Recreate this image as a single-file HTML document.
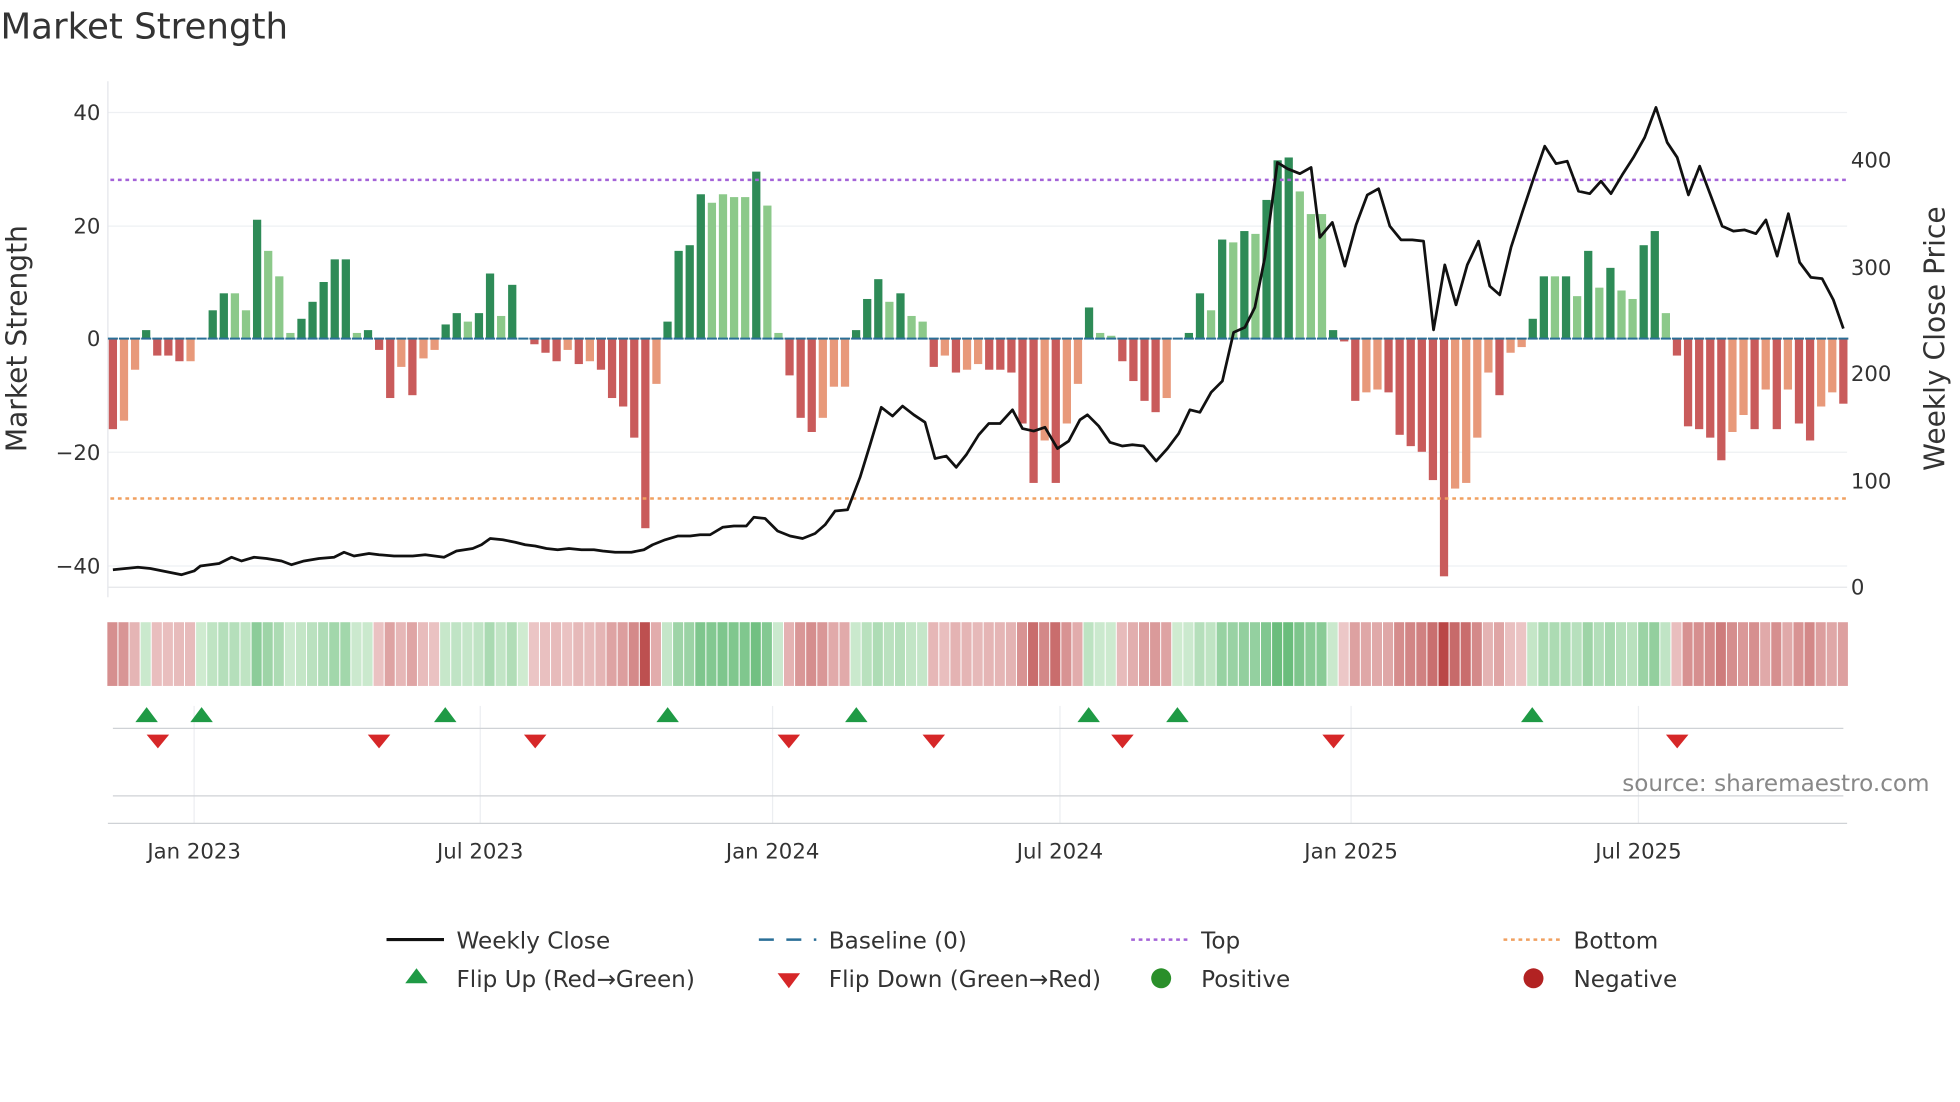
<!DOCTYPE html>
<html><head><meta charset="utf-8"><style>
html,body{margin:0;padding:0;background:#fff;}
svg{display:block;font-family:"DejaVu Sans","Liberation Sans",sans-serif;}
</style></head><body>
<svg id="s" width="1960" height="1102" viewBox="0 0 1568 882" xmlns="http://www.w3.org/2000/svg">
<rect width="1568" height="882" fill="#fff"/>
<text x="0" y="31" font-size="28.5" fill="#333">Market Strength</text>
<g stroke="#eef0f3" stroke-width="1">
<line x1="86" x2="1478" y1="90" y2="90"/><line x1="86" x2="1478" y1="181" y2="181"/>
<line x1="86" x2="1478" y1="362" y2="362"/><line x1="86" x2="1478" y1="453" y2="453"/>
<line x1="86" x2="1478" y1="271" y2="271"/>
</g>
<line x1="86" x2="86" y1="65" y2="478" stroke="#e4e6ea"/>
<line x1="86" x2="1478" y1="470" y2="470" stroke="#e4e6ea"/>
<g id="bars"></g>
<line x1="88" x2="1478" y1="144" y2="144" stroke="#a463d8" stroke-width="2" stroke-dasharray="3,3"/>
<line x1="88" x2="1478" y1="399" y2="399" stroke="#f0a060" stroke-width="2" stroke-dasharray="3,3"/>
<polyline id="price" fill="none" stroke="#111" stroke-width="2.2" stroke-linejoin="round"/>
<g font-size="17" fill="#333" text-anchor="end">
<text x="80" y="96">40</text><text x="80" y="187">20</text><text x="80" y="277">0</text>
<text x="80" y="368">−20</text><text x="80" y="459">−40</text>
</g>
<g font-size="17" fill="#333">
<text x="1481" y="134">400</text><text x="1481" y="220">300</text><text x="1481" y="305">200</text>
<text x="1481" y="391">100</text><text x="1481" y="476">0</text>
</g>
<text transform="translate(21,271) rotate(-90)" font-size="22.5" fill="#333" text-anchor="middle">Market Strength</text>
<text transform="translate(1556,271) rotate(-90)" font-size="22.5" fill="#333" text-anchor="middle">Weekly Close Price</text>
<g id="heat"></g>
<g stroke="#eceef1">
<line x1="155" x2="155" y1="565" y2="659"/><line x1="384" x2="384" y1="565" y2="659"/>
<line x1="618" x2="618" y1="565" y2="659"/><line x1="848" x2="848" y1="565" y2="659"/>
<line x1="1081" x2="1081" y1="565" y2="659"/><line x1="1311" x2="1311" y1="565" y2="659"/>
</g>
<line x1="90" x2="1475" y1="583" y2="583" stroke="#cfd2d6"/>
<line x1="90" x2="1475" y1="637" y2="637" stroke="#cfd2d6"/>
<line x1="86" x2="1478" y1="659" y2="659" stroke="#cfd2d6"/>
<g id="marks"></g>
<text x="1544" y="633" font-size="18.5" fill="#888" text-anchor="end">source: sharemaestro.com</text>
<g font-size="17" fill="#333" text-anchor="middle">
<text x="155" y="687">Jan 2023</text><text x="384" y="687">Jul 2023</text><text x="618" y="687">Jan 2024</text>
<text x="848" y="687">Jul 2024</text><text x="1081" y="687">Jan 2025</text><text x="1311" y="687">Jul 2025</text>
</g>
<g font-size="18.5" fill="#333">
<line x1="309" x2="355" y1="752" y2="752" stroke="#111" stroke-width="2.5"/><text x="365" y="759">Weekly Close</text>
<line x1="607" x2="653" y1="752" y2="752" stroke="#2a6f97" stroke-width="2" stroke-dasharray="12,10"/><text x="663" y="759">Baseline (0)</text>
<line x1="905" x2="951" y1="752" y2="752" stroke="#a463d8" stroke-width="2" stroke-dasharray="3,3"/><text x="961" y="759">Top</text>
<line x1="1203" x2="1249" y1="752" y2="752" stroke="#f0a060" stroke-width="2" stroke-dasharray="3,3"/><text x="1259" y="759">Bottom</text>
<polygon points="333,775 324,787 342,787" fill="#1f9a45"/><text x="365" y="790">Flip Up (Red→Green)</text>
<polygon points="622,779 640,779 631,791" fill="#d62728"/><text x="663" y="790">Flip Down (Green→Red)</text>
<circle cx="929" cy="783" r="8" fill="#2a8f2a"/><text x="961" y="790">Positive</text>
<circle cx="1227" cy="783" r="8" fill="#b22222"/><text x="1259" y="790">Negative</text>
</g>
</svg>
<script>
var V="-16,-14.5L,-5.5L,1.5,-3,-3,-4,-4L,0,5,8,8L,5L,21,15.5L,11L,1L,3.5,6.5,10,14,14,1L,1.5,-2,-10.5,-5L,-10,-3.5L,-2L,2.5,4.5,3L,4.5,11.5,4L,9.5,0,-1,-2.5,-4,-2L,-4.5,-4L,-5.5,-10.5,-12,-17.5,-33.5,-8L,3,15.5,16.5,25.5,24L,25.5L,25L,25L,29.5,23.5L,1L,-6.5,-14,-16.5,-14L,-8.5L,-8.5L,1.5,7,10.5,6.5L,8,4L,3L,-5,-3L,-6,-5.5L,-4.5L,-5.5,-5.5,-6,-15,-25.5,-18L,-25.5,-15L,-8L,5.5,1L,0.5L,-4,-7.5,-11,-13,-10.5L,0,1,8,5L,17.5,17L,19,18.5L,24.5,31.5,32,26L,22L,22L,1.5,-0.5,-11,-9.5L,-9L,-9.5,-17,-19,-20,-25,-42,-26.5L,-25.5L,-17.5L,-6L,-10,-2.5L,-1.5L,3.5,11,11L,11,7.5L,15.5,9L,12.5,8.5L,7L,16.5,19,4.5L,-3,-15.5,-16,-17.5,-21.5,-16.5L,-13.5L,-16,-9L,-16,-9L,-15,-18,-12L,-9.5L,-11.5".split(",");
var NS="http://www.w3.org/2000/svg";
function el(p,t,a){var e=document.createElementNS(NS,t);for(var k in a)e.setAttribute(k,a[k]);p.appendChild(e);return e;}
var bars=document.getElementById("bars"),heat=document.getElementById("heat");
var n=V.length,x0=90,x1=1475,step=(x1-x0)/(n-1);
for(var i=0;i<n;i++){var s=V[i],L=s.indexOf("L")>=0,v=parseFloat(s);var x=x0+i*step;
 var y=271-v*4.53,c=v>=0?(L?"#8cc98a":"#2e8b57"):(L?"#e8997a":"#c95b5b");
 if(Math.abs(v)>0.2)el(bars,"rect",{x:x-3.3,y:Math.min(y,271),width:6.6,height:Math.abs(v*4.53),fill:c});
 el(bars,"line",{x1:x-4,x2:x+4,y1:271,y2:271,stroke:"#2a6f97","stroke-width":1.6});
 var t=Math.min(1,Math.abs(v)/36);var a,b;
 if(v>=0){a=[218,240,218];b=[76,175,99];}else{a=[242,214,214];b=[178,52,52];}
 var col="rgb("+[0,1,2].map(function(k){return Math.round(a[k]+(b[k]-a[k])*(0.08+0.8*t));}).join(",")+")";
 el(heat,"rect",{x:x-step/2,y:498,width:step-0.8,height:51,fill:col});}
var P=[[90,456],[100,455],[110,454],[120,455],[130,457],[145,460],[155,457],[160,453],[175,451],[185,446],[193,449],[203,446],[213,447],[225,449],[233,452],[243,449],[255,447],[267,446],[275,442],[283,445],[295,443],[303,444],[315,445],[330,445],[340,444],[355,446],[365,441],[378,439],[385,436],[392,431],[402,432],[412,434],[420,436],[428,437],[437,439],[446,440],[455,439],[465,440],[475,440],[482,441],[492,442],[505,442],[515,440],[522,436],[532,432],[542,429],[552,429],[560,428],[568,428],[578,422],[587,421],[597,421],[603,414],[612,415],[622,425],[632,429],[642,431],[652,427],[660,420],[668,409],[678,408],[688,382],[696,356],[705,326],[714,333],[722,325],[731,332],[740,338],[748,367],[757,365],[765,374],[773,364],[783,348],[791,339],[800,339],[810,328],[818,343],[827,345],[836,342],[846,359],[855,353],[864,336],[870,332],[879,341],[888,354],[898,357],[906,356],[915,357],[925,369],[934,359],[943,347],[952,328],[960,330],[969,314],[978,305],[987,266],[996,262],[1004,246],[1012,206],[1022,130],[1030,135],[1040,139],[1049,134],[1056,190],[1066,178],[1076,213],[1085,180],[1094,156],[1103,151],[1112,181],[1121,192],[1130,192],[1139,193],[1147,264],[1156,212],[1165,244],[1174,212],[1183,193],[1192,229],[1200,236],[1209,198],[1218,170],[1227,143],[1236,117],[1245,131],[1254,129],[1263,153],[1272,155],[1281,145],[1289,155],[1298,140],[1307,126],[1316,110],[1325,86],[1334,114],[1342,126],[1351,156],[1360,133],[1369,157],[1378,181],[1387,185],[1396,184],[1405,187],[1413,176],[1422,205],[1431,171],[1440,210],[1449,222],[1458,223],[1467,240],[1475,263]];
document.getElementById("price").setAttribute("points",P.map(function(p){return p.join(",");}).join(" "));
var m=document.getElementById("marks");
[117,161,356,534,685,871,942,1226].forEach(function(x){el(m,"polygon",{points:(x)+",566 "+(x-9)+",578 "+(x+9)+",578",fill:"#1f9a45"});});
[126,303,428,631,747,898,1067,1342].forEach(function(x){el(m,"polygon",{points:(x-9)+",588 "+(x+9)+",588 "+x+",599",fill:"#d62728"});});
</script>
</body></html>
